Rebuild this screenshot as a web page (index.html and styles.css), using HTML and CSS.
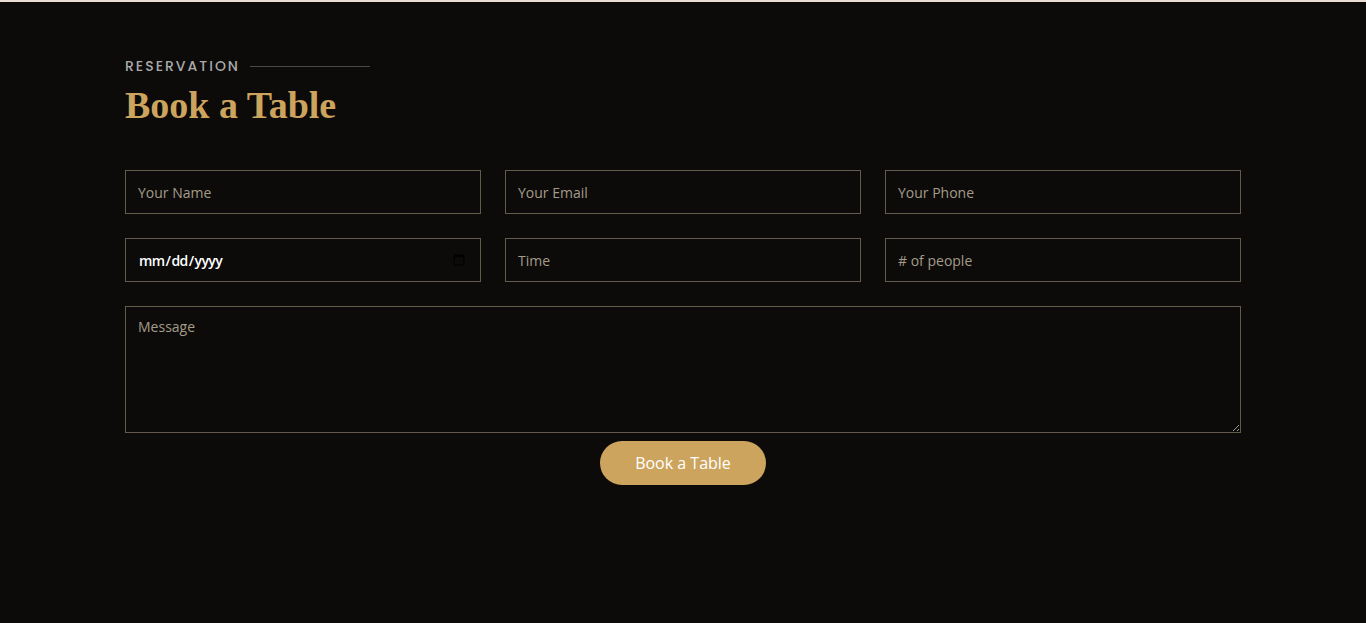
FILE: index.html
```html
<!DOCTYPE html>
<html lang="en">
<head>
<meta charset="utf-8">
<title>Book a Table</title>
<link rel="stylesheet" href="styles.css">
</head>
<body>
<section class="book">
  <div class="container">
    <div class="section-title">
      <h2 class="eyebrow">Reservation</h2>
      <p class="title">Book a Table</p>
    </div>
    <form class="form">
      <div class="grid">
        <input class="field" type="text" placeholder="Your Name">
        <input class="field" type="email" placeholder="Your Email">
        <input class="field" type="text" placeholder="Your Phone">
        <input class="field date" type="date">
        <input class="field" type="text" placeholder="Time">
        <input class="field" type="number" placeholder="# of people">
      </div>
      <textarea class="field message" rows="5" placeholder="Message"></textarea>
      <div class="actions">
        <button class="btn" type="button">Book a Table</button>
      </div>
    </form>
  </div>
</section>
</body>
</html>
```
FILE: styles.css
```css
html, body {
  margin: 0;
  padding: 0;
  background: #0c0b09;
}
body {
  border-top: 2px solid #e9ddd6;
  min-height: 621px;
  font-family: "Open Sans", "Liberation Sans", sans-serif;
}
.book {
  padding-top: 55px;
}
.container {
  width: 1116px;
  margin: 0 auto;
}
.section-title {
  margin-bottom: 41px;
}
.eyebrow {
  margin: 0;
  display: flex;
  align-items: center;
  font-family: "Poppins", "Inter", "Liberation Sans", sans-serif;
  font-size: 14px;
  font-weight: 500;
  letter-spacing: 2px;
  text-transform: uppercase;
  color: #aaaaaa;
  line-height: 18px;
}
.eyebrow::after {
  content: "";
  width: 120px;
  height: 1px;
  background: #4a4844;
  margin-left: 10px;
}
.title {
  margin: 6px 0 0;
  font-family: "Liberation Serif", "DejaVu Serif", serif;
  font-weight: 700;
  font-size: 38px;
  line-height: 48px;
  color: #cda45e;
}
.grid {
  display: grid;
  grid-template-columns: repeat(3, 1fr);
  column-gap: 24px;
  row-gap: 24px;
}
.field {
  box-sizing: border-box;
  height: 44px;
  width: 100%;
  margin: 0;
  padding: 10px 12px;
  background: #0c0b09;
  border: 1px solid #625b4b;
  border-radius: 0;
  color: #ffffff;
  font-family: "Open Sans", "Liberation Sans", sans-serif;
  font-size: 14px;
  outline: none;
}
.field::placeholder {
  color: #a49b89;
}
.date {
  color: #ffffff;
  font-size: 14px;
  font-weight: 600;
  letter-spacing: -0.6px;
}
.message {
  display: block;
  height: 127px;
  margin-top: 24px;
  resize: vertical;
  padding: 10px 12px;
}
.actions {
  display: flex;
  justify-content: center;
  margin-top: 8px;
}
.btn {
  width: 166px;
  height: 44px;
  border: 0;
  border-radius: 50px;
  background: #cda45e;
  color: #ffffff;
  font-family: "Open Sans", "Liberation Sans", sans-serif;
  font-size: 16px;
  cursor: pointer;
}
```
